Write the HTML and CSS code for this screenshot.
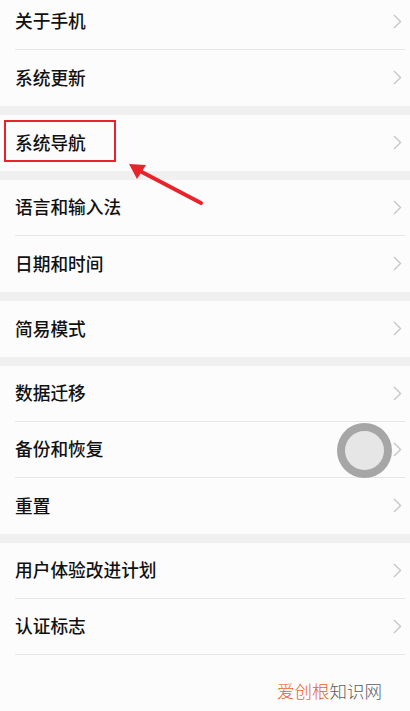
FILE: index.html
```html
<!doctype html>
<html>
  <head>
    <meta charset="UTF-8">
    <meta name="viewport" content="width=device-width, initial-scale=1.0">
    <title>设置</title>
    <link rel="stylesheet" href="styles.css">
  </head>
  <body>
    <div class="page">
      <div class="group">
        <div class="item"><span class="label">关于手机</span><svg class="chevron" viewBox="0 0 9 15"><path d="M1 1l6.5 6.5L1 14"/></svg></div>
        <div class="item"><span class="label">系统更新</span><svg class="chevron" viewBox="0 0 9 15"><path d="M1 1l6.5 6.5L1 14"/></svg></div>
      </div>

      <div class="group">
        <div class="item marked">
          <span class="label">系统导航</span><svg class="chevron" viewBox="0 0 9 15"><path d="M1 1l6.5 6.5L1 14"/></svg>
          <div class="highlight"></div>
        </div>
      </div>

      <div class="group">
        <div class="item"><span class="label">语言和输入法</span><svg class="chevron" viewBox="0 0 9 15"><path d="M1 1l6.5 6.5L1 14"/></svg></div>
        <div class="item"><span class="label">日期和时间</span><svg class="chevron" viewBox="0 0 9 15"><path d="M1 1l6.5 6.5L1 14"/></svg></div>
      </div>

      <div class="group">
        <div class="item"><span class="label">简易模式</span><svg class="chevron" viewBox="0 0 9 15"><path d="M1 1l6.5 6.5L1 14"/></svg></div>
      </div>

      <div class="group">
        <div class="item"><span class="label">数据迁移</span><svg class="chevron" viewBox="0 0 9 15"><path d="M1 1l6.5 6.5L1 14"/></svg></div>
        <div class="item"><span class="label">备份和恢复</span><svg class="chevron" viewBox="0 0 9 15"><path d="M1 1l6.5 6.5L1 14"/></svg></div>
        <div class="item"><span class="label">重置</span><svg class="chevron" viewBox="0 0 9 15"><path d="M1 1l6.5 6.5L1 14"/></svg></div>
      </div>

      <div class="group last">
        <div class="item"><span class="label">用户体验改进计划</span><svg class="chevron" viewBox="0 0 9 15"><path d="M1 1l6.5 6.5L1 14"/></svg></div>
        <div class="item"><span class="label">认证标志</span><svg class="chevron" viewBox="0 0 9 15"><path d="M1 1l6.5 6.5L1 14"/></svg></div>
      </div>
    </div>

    <!-- annotation arrow -->
    <svg class="arrow" width="410" height="711" viewBox="0 0 410 711">
      <line x1="201" y1="203" x2="138" y2="170" />
      <polygon points="129,164 146,165 137,179" />
    </svg>

    <!-- assistive touch button -->
    <div class="float-ball"><div class="float-inner"></div></div>

    <div class="watermark"><span class="wm-orange">爱创根</span><span class="wm-gray">知识网</span></div>
  </body>
</html>
```

FILE: styles.css
```css
* {
  margin: 0;
  padding: 0;
  box-sizing: border-box;
}

body {
  width: 410px;
  height: 711px;
  overflow: hidden;
  position: relative;
  background: #fcfcfc;
  font-family: "Noto Sans CJK SC", "Noto Sans", sans-serif;
  color: #111111;
}

.page {
  margin-top: -6.5px;
}

.group {
  background: #fcfcfc;
}

.group + .group {
  border-top: 9px solid #f0f0f0;
}

.item {
  position: relative;
  height: 56px;
  margin-left: 15px;
  margin-right: 5px;
  padding-right: 3px;
  display: flex;
  align-items: center;
  justify-content: space-between;
  border-bottom: 1px solid #e6e6e6;
}

.item:last-child {
  border-bottom: none;
}

.group.last .item:last-child {
  border-bottom: 1px solid #e6e6e6;
}

.label {
  font-size: 17.7px;
  line-height: 1;
  font-weight: 500;
}

.chevron {
  width: 9px;
  height: 15px;
  fill: none;
  stroke: #c6c6c6;
  stroke-width: 1.4;
}

/* red annotation box */
.highlight {
  position: absolute;
  left: -11px;
  top: 5px;
  width: 112px;
  height: 42px;
  border: 2px solid #e8232b;
}

.arrow {
  position: absolute;
  left: 0;
  top: 0;
  pointer-events: none;
}

.arrow line {
  stroke: #e8232b;
  stroke-width: 4;
  stroke-linecap: round;
}

.arrow polygon {
  fill: #e8232b;
}

.float-ball {
  position: absolute;
  left: 337px;
  top: 423px;
  width: 55px;
  height: 55px;
  border-radius: 50%;
  background: #a6a6a6;
  display: flex;
  align-items: center;
  justify-content: center;
}

.float-inner {
  width: 39px;
  height: 39px;
  border-radius: 50%;
  background: #e6e6e6;
}

.watermark {
  position: absolute;
  left: 277px;
  top: 682px;
  font-size: 17.5px;
  line-height: 1;
  font-weight: 300;
}

.wm-orange {
  color: #e5652d;
}

.wm-gray {
  color: #5e5e5e;
}
```
